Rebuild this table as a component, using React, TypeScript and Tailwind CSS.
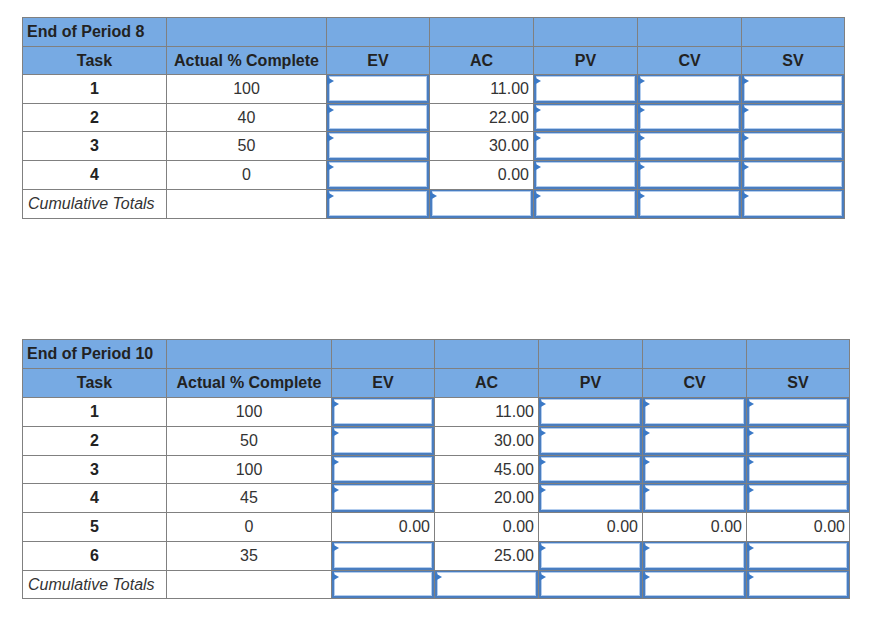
type Cell =
  | { kind: "input" }
  | { kind: "num"; v: string }
  | { kind: "blank" };

interface Row {
  task: string;
  pct: string;
  cells: Cell[]; // EV, AC, PV, CV, SV
}

const I: Cell = { kind: "input" };
const n = (v: string): Cell => ({ kind: "num", v });

const period8: Row[] = [
  { task: "1", pct: "100", cells: [I, n("11.00"), I, I, I] },
  { task: "2", pct: "40", cells: [I, n("22.00"), I, I, I] },
  { task: "3", pct: "50", cells: [I, n("30.00"), I, I, I] },
  { task: "4", pct: "0", cells: [I, n("0.00"), I, I, I] },
];

const period10: Row[] = [
  { task: "1", pct: "100", cells: [I, n("11.00"), I, I, I] },
  { task: "2", pct: "50", cells: [I, n("30.00"), I, I, I] },
  { task: "3", pct: "100", cells: [I, n("45.00"), I, I, I] },
  { task: "4", pct: "45", cells: [I, n("20.00"), I, I, I] },
  { task: "5", pct: "0", cells: [n("0.00"), n("0.00"), n("0.00"), n("0.00"), n("0.00")] },
  { task: "6", pct: "35", cells: [I, n("25.00"), I, I, I] },
];

const heads = ["EV", "AC", "PV", "CV", "SV"];

function EntryBox() {
  return (
    <div className="relative h-full w-full border-t border-x-2 border-b-2 border-[#4a7dbf] bg-white shadow-[inset_0_0_0_1px_#b3cdee]">
      <svg
        className="absolute -left-[2px] top-[1px]"
        width="7"
        height="8"
        viewBox="0 0 7 8"
      >
        <polygon points="0,0 7,4 0,8" fill="#3b79c6" />
      </svg>
    </div>
  );
}

function ValueCell({ cell }: { cell: Cell }) {
  if (cell.kind === "input") return <EntryBox />;
  if (cell.kind === "num")
    return (
      <div className="flex h-full items-center justify-end pr-[4px] text-[#333]">
        {cell.v}
      </div>
    );
  return null;
}

function PeriodTable({
  title,
  rows,
  cols,
  rowHeights,
}: {
  title: string;
  rows: Row[];
  cols: string;
  rowHeights: string;
}) {
  const cell = "border-r border-b border-[#808080]";
  return (
    <div
      className={`grid border-l border-t border-[#808080] text-[16px] ${cols} ${rowHeights}`}
    >
      {/* header 1 */}
      <div className={`${cell} bg-[#77aae3] flex items-center pl-[4px] font-bold text-[#222]`}>
        {title}
      </div>
      {[0, 1, 2, 3, 4, 5].map((i) => (
        <div key={i} className={`${cell} bg-[#77aae3]`} />
      ))}

      {/* header 2 */}
      <div className={`${cell} bg-[#77aae3] flex items-center justify-center font-bold text-[#222]`}>
        Task
      </div>
      <div className={`${cell} bg-[#77aae3] flex items-center justify-center font-bold text-[#222] whitespace-nowrap`}>
        Actual % Complete
      </div>
      {heads.map((h) => (
        <div
          key={h}
          className={`${cell} bg-[#77aae3] flex items-center justify-center font-bold text-[#222]`}
        >
          {h}
        </div>
      ))}

      {rows.map((r) => (
        <RowCells key={r.task} row={r} cell={cell} />
      ))}

      {/* totals */}
      <div className={`${cell} flex items-center pl-[5px] italic text-[#333] whitespace-nowrap`}>
        Cumulative Totals
      </div>
      <div className={cell} />
      {heads.map((h) => (
        <div key={h} className={cell}>
          <EntryBox />
        </div>
      ))}
    </div>
  );
}

function RowCells({ row, cell }: { row: Row; cell: string }) {
  return (
    <>
      <div className={`${cell} flex items-center justify-center font-bold text-[#222]`}>
        {row.task}
      </div>
      <div className={`${cell} flex items-center justify-center text-[#333]`}>
        {row.pct}
      </div>
      {row.cells.map((c, i) => (
        <div key={i} className={cell}>
          <ValueCell cell={c} />
        </div>
      ))}
    </>
  );
}

export default function App() {
  return (
    <div
      className="min-h-[637px] w-[877px] bg-white pl-[22px] pt-[17px]"
      style={{ fontFamily: '"Liberation Sans", Arial, sans-serif' }}
    >
      <div className="w-fit">
        <PeriodTable
          title="End of Period 8"
          rows={period8}
          cols="grid-cols-[144px_160px_103px_104px_104px_104px_103px]"
          rowHeights="grid-rows-[29px_28px_29px_28px_29px_29px_29px]"
        />
      </div>
      <div className="mt-[120px] w-fit">
        <PeriodTable
          title="End of Period 10"
          rows={period10}
          cols="grid-cols-[144px_165px_103px_104px_104px_104px_103px]"
          rowHeights="grid-rows-[29px_29px_29px_29px_28px_29px_29px_29px_28px]"
        />
      </div>
    </div>
  );
}
